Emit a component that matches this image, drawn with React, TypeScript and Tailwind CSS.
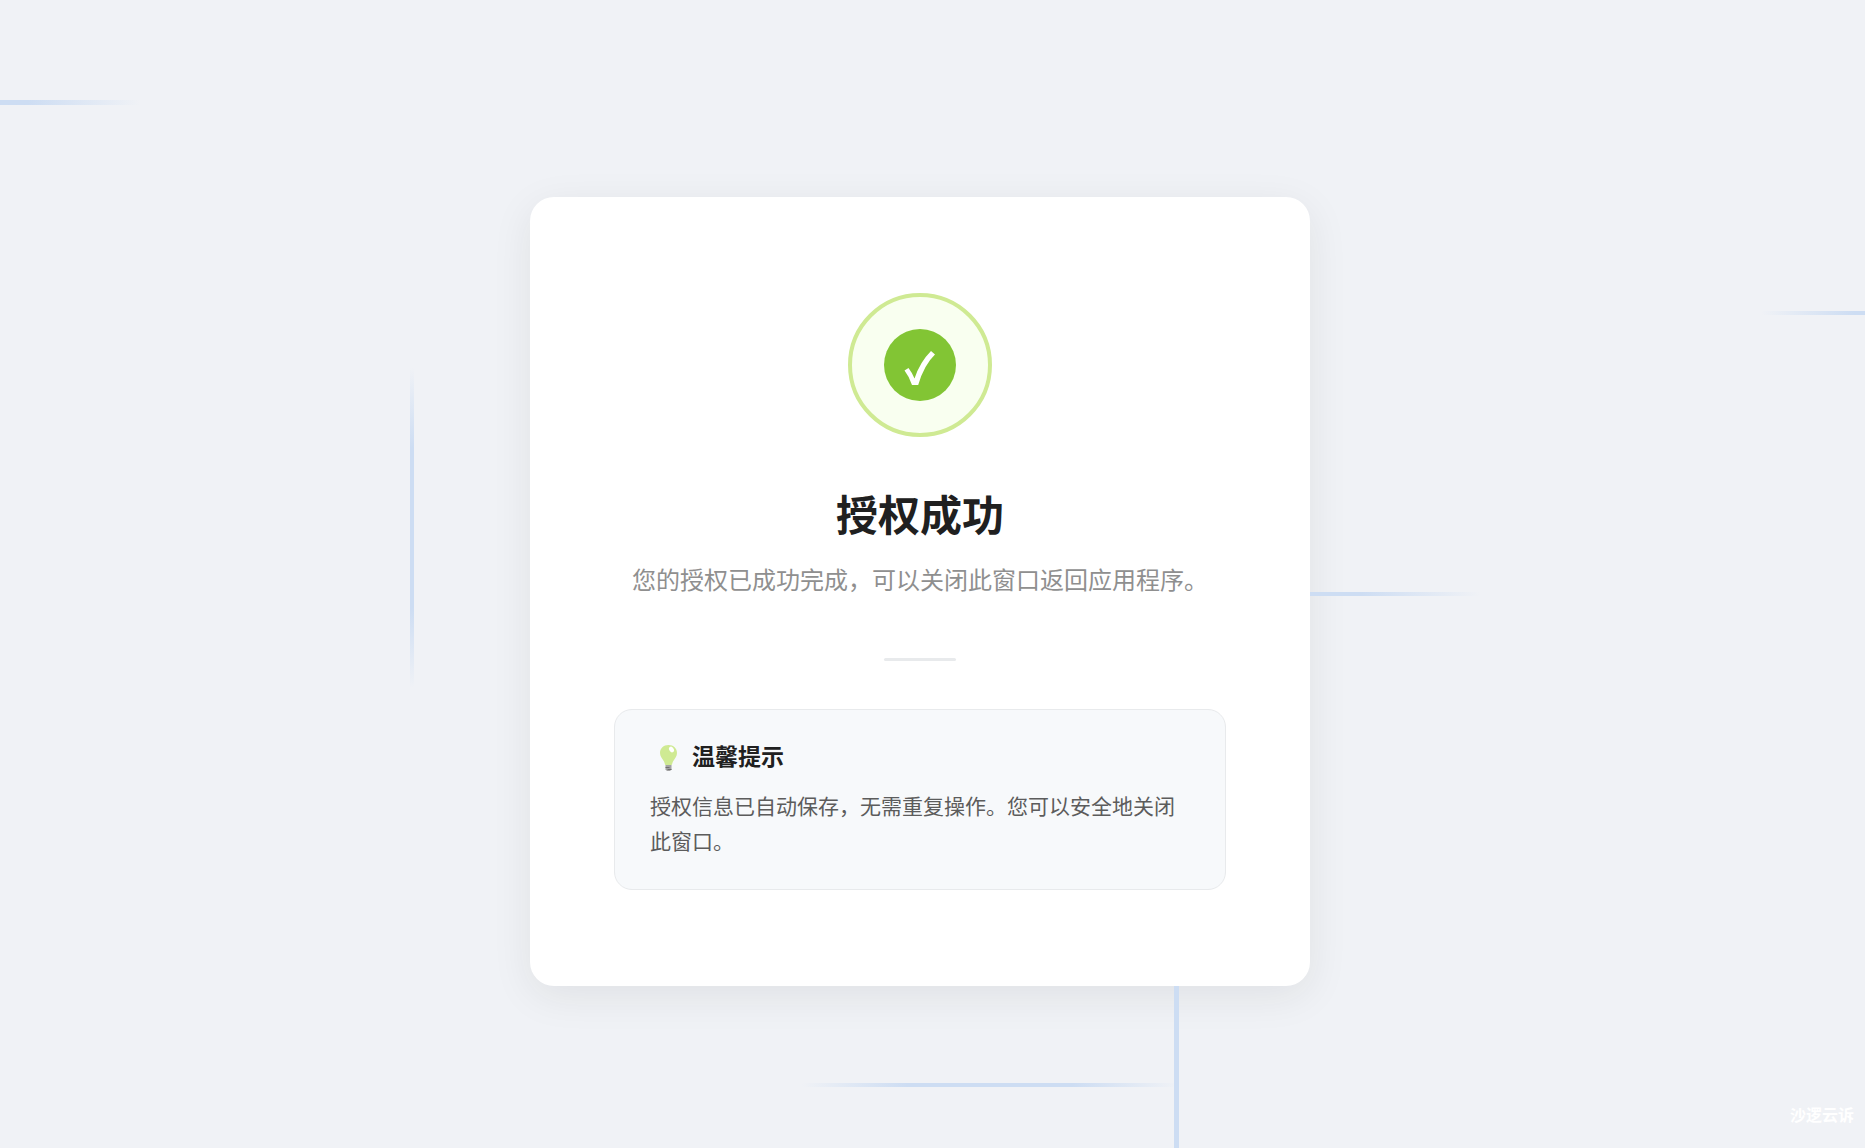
function Backdrop() {
  return (
    <div aria-hidden="true" className="pointer-events-none absolute inset-0 overflow-hidden">
      <div className="absolute left-0 top-[100px] h-[5px] w-[140px] bg-linear-to-r from-[#cdddf3] from-20% to-[#cdddf3]/0" />
      <div className="absolute right-0 top-[311px] h-1 w-[104px] bg-linear-to-l from-[#cdddf3] from-10% to-[#cdddf3]/0" />
      <div className="absolute left-[22%] top-[368px] h-[320px] w-1 bg-[linear-gradient(to_bottom,transparent,#cdddf3_25%,#cdddf3_75%,transparent)]" />
      <div className="absolute bottom-[61px] left-[43%] h-1 w-[376px] bg-[linear-gradient(to_right,transparent,#cdddf3_28%,#cdddf3_72%,transparent)]" />
    </div>
  );
}

function SuccessBadge() {
  return (
    <div className="flex size-36 items-center justify-center rounded-full border-4 border-[#cfea93] bg-[#f9fff0]">
      <div className="flex size-[72px] items-center justify-center rounded-full bg-[#82c534]">
        <svg viewBox="0 0 72 72" className="size-[72px]" fill="none" role="img" aria-label="成功">
          <path
            d="M20.5 41.5 L24.5 39 Q28 43.5 30.5 49.5 Q36 33 47 22 L51 25.5 Q40 36 34.2 56 H28 Q25.500 48 20.500 41.500Z"
            fill="#fff"
          />
        </svg>
      </div>
    </div>
  );
}

function BulbIcon() {
  return (
    <svg viewBox="0 0 32 32" className="size-8" aria-hidden="true">
      <path d="M18.500 6C13.500 6 10 9.500 10 14c0 3.500 2 5 4 8.500.7 1.500 1 3.500 1.500 3.500h6c.5 0 .8-2 1.500-3.500 2-3.500 4-5 4-8.500 0-4.500-3.500-8-8.500-8z" fill="#cfea93" />
      <ellipse cx="21.500" cy="10.500" rx="2.200" ry="3" transform="rotate(-35 21.500 10.500)" fill="#fff" />
      <path d="M15.500 26h6v4.500l-1.500 1.500h-3l-1.500-1.500z" fill="#a3a3a3" />
      <path d="M15.500 28.500h4M17.500 30.500h4" stroke="#707070" />
    </svg>
  );
}

export default function App() {
  return (
    <div className="relative flex min-h-screen items-center justify-center overflow-hidden bg-[#f0f2f6] pr-[25px] pt-[35px] font-['Noto_Sans_CJK_SC',sans-serif]">
      <Backdrop />
      <main className="relative w-full max-w-[780px]">
        <section className="relative flex flex-col items-center rounded-3xl bg-white px-[84px] py-24 shadow-[0_10px_40px_rgba(40,36,20,0.08)]">
          <SuccessBadge />
          <h1 className="mt-[52px] text-center text-[42px] leading-[48px] font-bold text-[#202020]">授权成功</h1>
          <p className="mt-6 text-center text-2xl leading-9 text-[#8f8f8f]">
            您的授权已成功完成，可以关闭此窗口返回应用程序。
          </p>
          <hr className="mt-[61px] h-[3px] w-[72px] rounded-full border-0 bg-[#e8eaec]" />
          <div className="mt-12 w-full rounded-[18px] border border-[#e8eaec] bg-[#f7f9fb] px-[35px] pt-[29px] pb-[31px]">
            <h2 className="flex items-center gap-[10px] text-[23px] leading-8 font-bold text-[#202020]">
              <BulbIcon />
              温馨提示
            </h2>
            <p className="mt-[17px] text-[21px] leading-[35px] text-[#5c5c5c]">
              授权信息已自动保存，无需重复操作。您可以安全地关闭此窗口。
            </p>
          </div>
        </section>
        <div aria-hidden="true" className="absolute left-full top-[395px] h-1 w-[170px] bg-linear-to-r from-[#cdddf3] from-30% to-[#cdddf3]/0" />
        <div aria-hidden="true" className="absolute left-[644px] top-full h-[180px] w-[5px] bg-[#cdddf3]" />
      </main>
      <span className="absolute bottom-6 right-[11px] text-[16px] leading-5 font-bold text-white">沙逻云诉</span>
    </div>
  );
}
